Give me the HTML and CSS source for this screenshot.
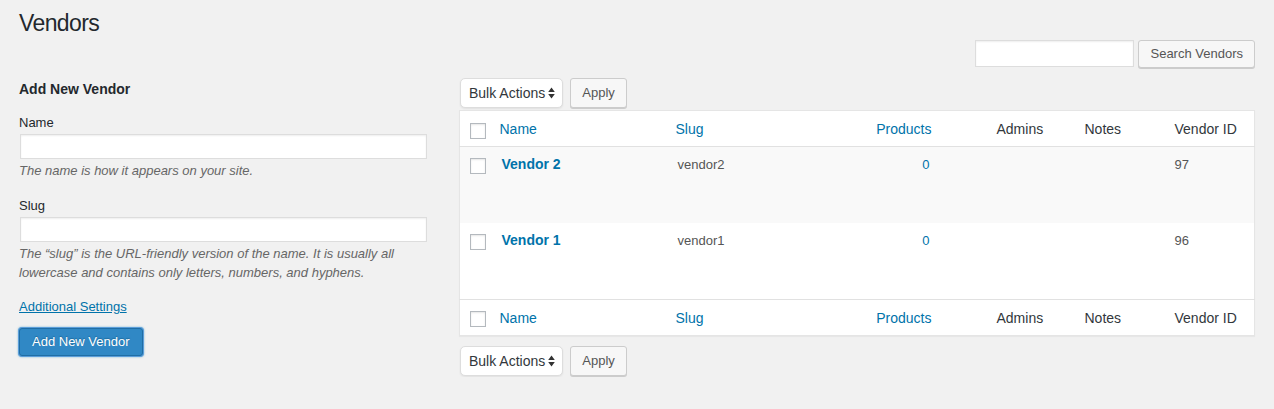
FILE: index.html
```html
<!DOCTYPE html>
<html lang="en">
<head>
<meta charset="utf-8">
<title>Vendors</title>
<link rel="stylesheet" href="styles.css">
</head>
<body>
<div class="wrap">
  <h1 class="page-title">Vendors</h1>
  <div class="search-box">
    <input class="search-input" type="search" aria-label="Search Vendors">
    <button class="button search-button" type="button">Search Vendors</button>
  </div>
  <div class="col-container">
    <div class="col-left">
      <div class="form-wrap">
        <h2 class="form-title">Add New Vendor</h2>
        <div class="form-field">
          <label class="field-label">Name</label>
          <input class="text-input" type="text">
          <p class="description">The name is how it appears on your site.</p>
        </div>
        <div class="form-field">
          <label class="field-label">Slug</label>
          <input class="text-input" type="text">
          <p class="description">The “slug” is the URL-friendly version of the name. It is usually all<br>lowercase and contains only letters, numbers, and hyphens.</p>
        </div>
        <p class="settings-link"><a href="#">Additional Settings</a></p>
        <button class="button-primary" type="button">Add New Vendor</button>
      </div>
    </div>
    <div class="col-right">
      <div class="tablenav tablenav-top">
        <div class="fake-select"><span>Bulk Actions</span>
          <svg class="select-arrows" width="7" height="12" viewBox="0 0 7 12"><path d="M3.5 0.5 L6.8 5 L0.2 5 Z M3.5 11.5 L6.8 7 L0.2 7 Z" fill="#333"/></svg>
        </div>
        <button class="button" type="button">Apply</button>
      </div>
      <table class="list-table">
        <colgroup>
          <col class="c-cb"><col class="c-name"><col class="c-slug"><col class="c-products"><col class="c-admins"><col class="c-notes"><col class="c-id">
        </colgroup>
        <thead>
          <tr>
            <th class="check-col"><span class="checkbox"></span></th>
            <th class="sortable"><a href="#">Name</a></th>
            <th class="sortable"><a href="#">Slug</a></th>
            <th class="sortable num"><a href="#">Products</a></th>
            <th class="plain">Admins</th>
            <th class="plain">Notes</th>
            <th class="plain">Vendor ID</th>
          </tr>
        </thead>
        <tbody>
          <tr class="alt">
            <td class="check-col"><span class="checkbox"></span></td>
            <td><a class="row-title" href="#">Vendor 2</a></td>
            <td>vendor2</td>
            <td class="num"><a href="#">0</a></td>
            <td></td>
            <td></td>
            <td>97</td>
          </tr>
          <tr>
            <td class="check-col"><span class="checkbox"></span></td>
            <td><a class="row-title" href="#">Vendor 1</a></td>
            <td>vendor1</td>
            <td class="num"><a href="#">0</a></td>
            <td></td>
            <td></td>
            <td>96</td>
          </tr>
        </tbody>
        <tfoot>
          <tr>
            <th class="check-col"><span class="checkbox"></span></th>
            <th class="sortable"><a href="#">Name</a></th>
            <th class="sortable"><a href="#">Slug</a></th>
            <th class="sortable num"><a href="#">Products</a></th>
            <th class="plain">Admins</th>
            <th class="plain">Notes</th>
            <th class="plain">Vendor ID</th>
          </tr>
        </tfoot>
      </table>
      <div class="tablenav tablenav-bottom">
        <div class="fake-select"><span>Bulk Actions</span>
          <svg class="select-arrows" width="7" height="12" viewBox="0 0 7 12"><path d="M3.5 0.5 L6.8 5 L0.2 5 Z M3.5 11.5 L6.8 7 L0.2 7 Z" fill="#333"/></svg>
        </div>
        <button class="button" type="button">Apply</button>
      </div>
    </div>
  </div>
</div>
</body>
</html>
```

FILE: styles.css
```css
html, body {
  margin: 0;
  padding: 0;
  background: #f1f1f1;
}
body {
  font-family: "Liberation Sans", Arial, sans-serif;
  font-size: 13px;
  color: #444;
}
.wrap {
  padding: 0 18px 0 19px;
}
.page-title {
  margin: 9px 0 0;
  font-size: 23px;
  line-height: 29px;
  font-weight: 400;
  color: #23282d;
  letter-spacing: -0.6px;
}
.search-box {
  display: flex;
  justify-content: flex-end;
  align-items: flex-start;
  gap: 4px;
  margin-top: 2px;
  padding-right: 1px;
  height: 28px;
}
.search-input {
  box-sizing: border-box;
  width: 159px;
  height: 27px;
  margin: 0;
  border: 1px solid #ddd;
  background: #fff;
  box-shadow: inset 0 1px 2px rgba(0,0,0,.07);
  outline: none;
}
.button {
  box-sizing: border-box;
  height: 28px;
  margin: 0;
  padding: 0 10px 1px;
  border: 1px solid #ccc;
  border-radius: 3px;
  background: #f7f7f7;
  box-shadow: 0 1px 0 #ccc;
  color: #555;
  font-family: "Liberation Sans", Arial, sans-serif;
  font-size: 13px;
  line-height: 26px;
  cursor: pointer;
}
.search-button {
  padding: 0 11px 1px;
}
.col-container {
  display: flex;
  align-items: flex-start;
}
.col-left {
  width: 433px;
  flex: none;
}
.col-right {
  flex: 1;
  padding-left: 7px;
  padding-right: 1px;
}
.form-title {
  margin: 12px 0 0;
  font-size: 14px;
  line-height: 18px;
  font-weight: 700;
  color: #23282d;
}
.form-field {
  margin-top: 16px;
}
.form-field + .form-field {
  margin-top: 16.5px;
}
.field-label {
  display: block;
  line-height: 18px;
  color: #23282d;
}
.text-input {
  display: block;
  box-sizing: border-box;
  width: 407px;
  height: 25px;
  margin: 2px 0 0 1px;
  border: 1px solid #ddd;
  background: #fff;
  box-shadow: inset 0 1px 2px rgba(0,0,0,.07);
  outline: none;
}
.description {
  margin: 2px 0 0;
  font-style: italic;
  line-height: 19px;
  color: #666;
}
.settings-link {
  margin: 16px 0 0;
  line-height: 18px;
}
.settings-link a {
  color: #0073aa;
  text-decoration: underline;
}
.button-primary {
  display: block;
  box-sizing: border-box;
  height: 28px;
  margin-top: 12px;
  padding: 0 12px 1px;
  border: 1px solid #1f6ea5;
  border-radius: 3px;
  background: #3088c5;
  color: #fff;
  font-family: "Liberation Sans", Arial, sans-serif;
  font-size: 13px;
  line-height: 26px;
  text-shadow: 0 -1px 1px #1d6a9c;
  box-shadow: 0 0 0 1px #5b9dd9, 0 0 2px 1px rgba(30,140,190,.6);
  cursor: pointer;
}
.tablenav {
  display: flex;
  align-items: flex-start;
  gap: 7px;
  height: 31px;
}
.tablenav-top {
  margin-top: 10px;
  margin-bottom: 1px;
}
.tablenav-bottom {
  margin-top: 10px;
}
.tablenav .button {
  height: 30px;
  line-height: 28px;
  padding: 0 11px 1px;
}
.fake-select {
  box-sizing: border-box;
  display: flex;
  align-items: center;
  gap: 3px;
  height: 30px;
  padding: 0 7px 0 8px;
  margin-left: 1px;
  border: 1px solid #ddd;
  border-radius: 5px;
  background: #fff;
  box-shadow: 0 1px 2px rgba(0,0,0,.07);
  font-size: 14px;
  color: #32373c;
}
.select-arrows {
  display: block;
}
.list-table {
  width: 100%;
  table-layout: fixed;
  border-collapse: collapse;
  border: 1px solid #e5e5e5;
  background: #fff;
  box-shadow: 0 1px 1px rgba(0,0,0,.04);
}
.c-cb { width: 32px; }
.c-name { width: 176px; }
.c-slug { width: 167px; }
.c-products { width: 152px; }
.c-admins { width: 88px; }
.c-notes { width: 90px; }
.c-id { width: 90px; }
.list-table th {
  text-align: left;
  font-weight: 400;
  font-size: 14px;
  line-height: 19px;
  color: #32373c;
  vertical-align: top;
  padding: 9px 10px 7px;
  height: 19px;
}
.list-table thead th {
  border-bottom: 1px solid #e1e1e1;
}
.list-table tfoot th {
  border-top: 1px solid #e1e1e1;
}
.list-table th.sortable {
  padding-left: 8px;
}
.list-table th.num {
  text-align: right;
  padding-right: 55px;
}
.list-table th a {
  color: #0073aa;
  text-decoration: none;
}
.list-table td {
  vertical-align: top;
  padding: 8px 10px;
  height: 60px;
  font-size: 13px;
  line-height: 19px;
  color: #555;
}
.list-table td.num {
  text-align: right;
  padding-right: 57px;
}
.list-table td a {
  color: #0073aa;
  text-decoration: none;
}
.list-table tr.alt td {
  background: #f9f9f9;
}
.list-table .row-title {
  font-size: 14px;
  font-weight: 700;
}
.list-table .check-col {
  padding: 11px 0 0 10px;
}
.list-table thead .check-col {
  padding-top: 12px;
}
.checkbox {
  display: block;
  box-sizing: border-box;
  width: 16px;
  height: 16px;
  border: 1px solid #b4b9be;
  background: #fff;
  box-shadow: inset 0 1px 2px rgba(0,0,0,.1);
}
```
